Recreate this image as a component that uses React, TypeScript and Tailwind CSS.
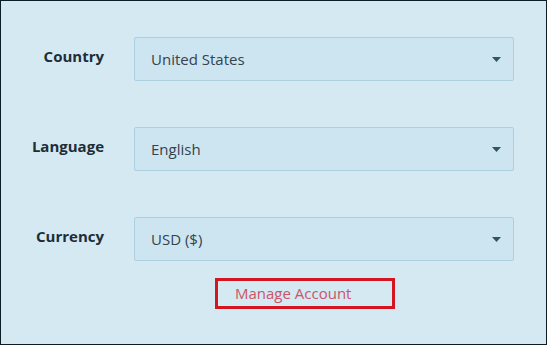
function SelectRow({ label, value }: { label: string; value: string }) {
  return (
    <div className="flex items-center">
      <div className="w-[103px] shrink-0 pb-[5px] text-right text-[15px] font-bold text-[#1e2d38]">{label}</div>
      <div className="ml-[30px] flex h-[44px] w-[380px] items-center justify-between rounded-[2px] border border-[#acd0e0] bg-[#cde5f0] pl-[16px] pr-[12px]">
        <span className="text-[15px] text-[#34434e]">{value}</span>
        <svg width="9" height="6" viewBox="0 0 9 6" className="mt-[2px]">
          <path d="M0 0 H9 L4.5 5 Z" fill="#2e5666" />
        </svg>
      </div>
    </div>
  );
}

export default function App() {
  return (
    <div
      className="flex h-[345px] w-[547px] flex-col border border-[#0d1d24] bg-[#d4e9f2]"
      style={{ fontFamily: '"Open Sans", "Liberation Sans", sans-serif' }}
    >
      <div className="mt-[36px] flex flex-col gap-[46px]">
        <SelectRow label="Country" value="United States" />
        <SelectRow label="Language" value="English" />
        <SelectRow label="Currency" value="USD ($)" />
      </div>
      <div className="ml-[214px] mt-[17px] flex h-[31px] w-[180px] items-center border-[3px] border-[#d3161f] pl-[17px]">
        <span className="text-[15px] text-[#cc5468]">Manage Account</span>
      </div>
    </div>
  );
}
